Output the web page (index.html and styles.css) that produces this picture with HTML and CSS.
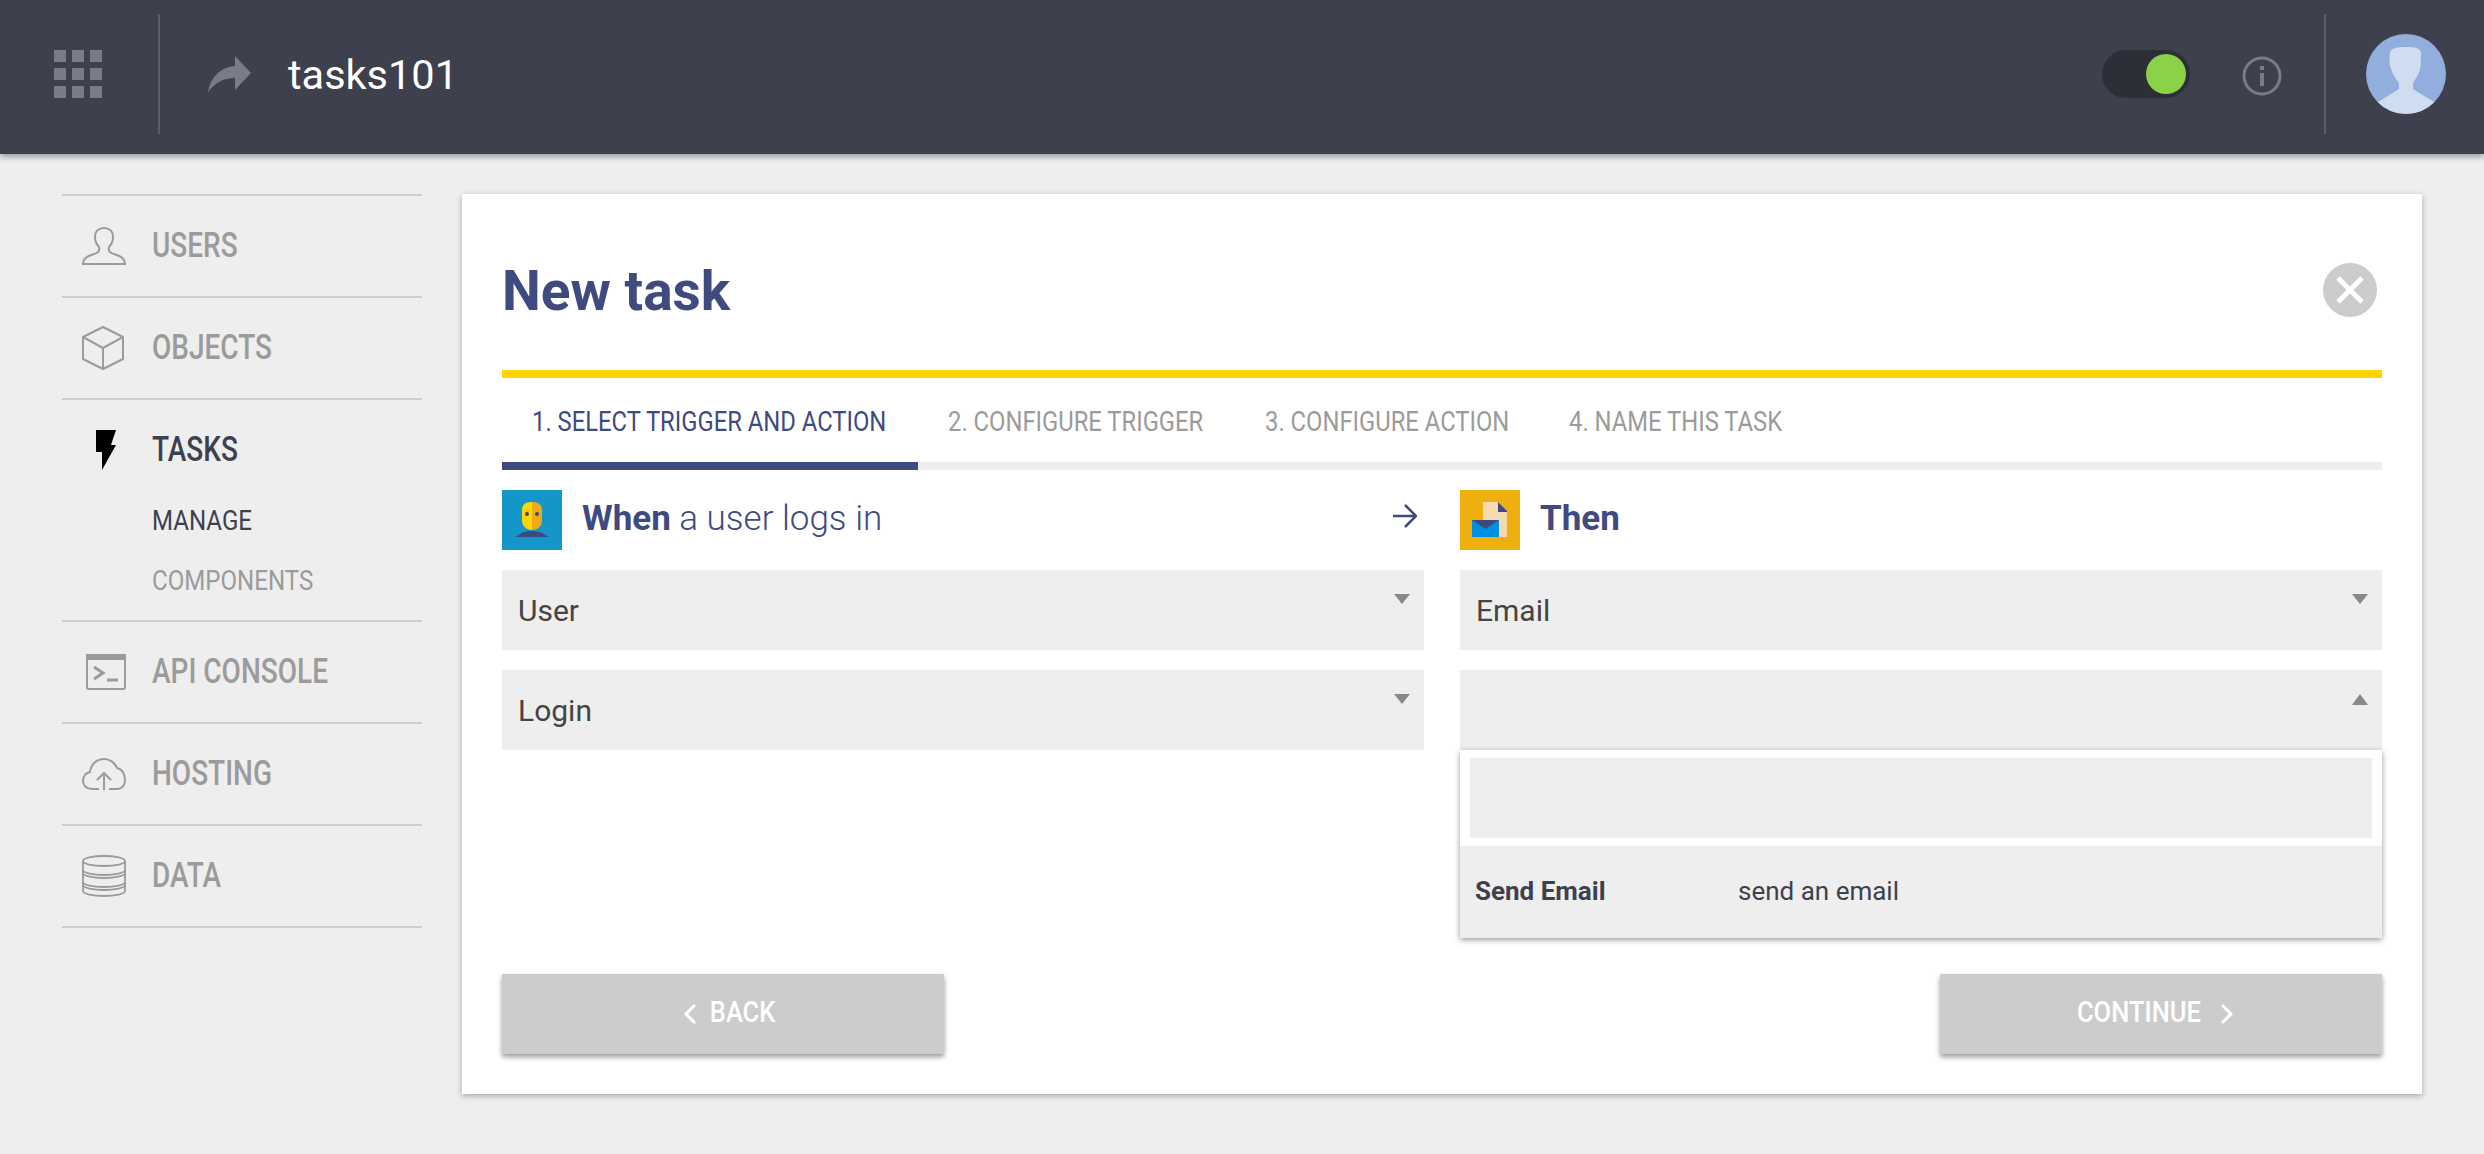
FILE: index.html
```html
<!DOCTYPE html>
<html lang="en">
<head>
  <meta charset="UTF-8">
  <title>tasks101</title>
  <link rel="stylesheet" href="styles.css">
</head>
<body>

  <header class="topbar">
    <div class="topbar-grid">
      <svg width="48" height="48" viewBox="0 0 48 48" fill="#797c86">
        <rect x="0" y="0" width="12" height="12"/><rect x="18" y="0" width="12" height="12"/><rect x="36" y="0" width="12" height="12"/>
        <rect x="0" y="18" width="12" height="12"/><rect x="18" y="18" width="12" height="12"/><rect x="36" y="18" width="12" height="12"/>
        <rect x="0" y="36" width="12" height="12"/><rect x="18" y="36" width="12" height="12"/><rect x="36" y="36" width="12" height="12"/>
      </svg>
    </div>
    <div class="topbar-title">
      <svg width="43" height="36" viewBox="0 0 43 36" fill="#797c86"><path d="M0 36C3 20 13 11 27 10V0L43 17 27 34V22C15 22 7 27 0 36Z"/></svg>
      <span class="app-name">tasks101</span>
    </div>
    <div class="topbar-tools">
      <div class="toggle"><span class="toggle-knob"></span></div>
      <svg class="info-icon" width="40" height="40" viewBox="0 0 40 40">
        <circle cx="20" cy="20" r="18" fill="none" stroke="#797c86" stroke-width="3"/>
        <rect x="18" y="10" width="4" height="4" fill="#797c86"/>
        <rect x="18" y="17" width="4" height="13" fill="#797c86"/>
      </svg>
    </div>
    <div class="topbar-user">
      <svg width="80" height="80" viewBox="0 0 80 80">
        <clipPath id="avatarClip"><circle cx="40" cy="40" r="40"/></clipPath>
        <g clip-path="url(#avatarClip)">
          <rect width="80" height="80" fill="#92aedd"/>
          <path d="M24 19C25 14 30 13 40 13 50 13 54 14 55 19 55 24 55 30 54 35 53 41 49 45 47 49V55L68 68 60 80H20L12 68 33 55V49C30 45 27 41 25 35 23 30 23 24 24 19Z" fill="#d0dcf0"/>
        </g>
      </svg>
    </div>
  </header>

  <div class="layout">
    <!-- Sidebar -->
    <nav class="sidebar">
      <a class="nav-item" href="#">
        <span class="nav-icon">
          <svg width="44" height="38" viewBox="0 0 44 38" fill="none" stroke="#9b9b9b" stroke-width="2"><path d="M1 37C1 31 6 29 12 27 16 26 18 24 17 20 14 17 13 13 13 10 13 4 17 1 22 1S31 4 31 10C31 13 30 17 27 20 26 24 28 26 32 27 38 29 43 31 43 37Z"/></svg>
        </span>
        <span class="nav-label">USERS</span>
      </a>
      <a class="nav-item" href="#">
        <span class="nav-icon">
          <svg width="42" height="44" viewBox="0 0 42 44" fill="none" stroke="#9b9b9b" stroke-width="2" stroke-linejoin="round"><path d="M21 1 41 11V33L21 43 1 33V11ZM1 11 21 22 41 11M21 22V43"/></svg>
        </span>
        <span class="nav-label">OBJECTS</span>
      </a>
      <div class="nav-group">
        <a class="nav-item nav-item-active" href="#">
          <span class="nav-icon icon-bolt">
            <svg width="20" height="40" viewBox="0 0 20 40" fill="#000"><path d="M0 0H20L15 15H20L6 40V22H0Z"/></svg>
          </span>
          <span class="nav-label">TASKS</span>
        </a>
        <a class="nav-sub nav-sub-active" href="#"><span class="cond">MANAGE</span></a>
        <a class="nav-sub" href="#"><span class="cond">COMPONENTS</span></a>
      </div>
      <a class="nav-item" href="#">
        <span class="nav-icon icon-terminal">
          <svg width="40" height="36" viewBox="0 0 40 36" fill="none" stroke="#9b9b9b" stroke-width="2"><rect x="1" y="1" width="38" height="34" rx="2"/><rect x="1" y="1" width="38" height="4" fill="#9b9b9b"/><path d="M8 13 17 19 8 25" stroke-width="3"/><path d="M21 26H32" stroke-width="3"/></svg>
        </span>
        <span class="nav-label">API CONSOLE</span>
      </a>
      <a class="nav-item" href="#">
        <span class="nav-icon">
          <svg width="44" height="32" viewBox="0 0 44 32" fill="none" stroke="#9b9b9b" stroke-width="2"><path d="M17 31H10C4 31 1 27 1 23 1 18 4 15 8 14 9 6 15 1 22 1 28 1 33 5 35 10 40 11 43 16 43 22 43 27 40 31 35 31H27"/><path d="M22 32V16M15 22 22 15 29 22"/></svg>
        </span>
        <span class="nav-label">HOSTING</span>
      </a>
      <a class="nav-item" href="#">
        <span class="nav-icon">
          <svg width="44" height="42" viewBox="0 0 44 42" fill="none" stroke="#9b9b9b" stroke-width="1.800"><ellipse cx="22" cy="6" rx="21" ry="5"/><path d="M1 6V36C1 39 11 41 22 41S43 39 43 36V6"/><path d="M1 15C1 18 11 20 22 20S43 18 43 15"/><path d="M1 18C1 21 11 23 22 23S43 21 43 18"/><path d="M1 27C1 30 11 32 22 32S43 30 43 27"/><path d="M1 30C1 33 11 35 22 35S43 33 43 30"/></svg>
        </span>
        <span class="nav-label">DATA</span>
      </a>
    </nav>

    <!-- New task panel -->
    <main class="panel">
      <div class="panel-head">
        <h1>New task</h1>
        <span class="close-btn">
          <svg width="28" height="28" viewBox="0 0 28 28" stroke="#fff" stroke-width="5"><path d="M2 2 26 26M26 2 2 26"/></svg>
        </span>
      </div>

      <div class="tabs">
        <span class="tab tab-1 tab-active"><span class="cond">1. SELECT TRIGGER AND ACTION</span></span>
        <span class="tab tab-2"><span class="cond">2. CONFIGURE TRIGGER</span></span>
        <span class="tab tab-3"><span class="cond">3. CONFIGURE ACTION</span></span>
        <span class="tab"><span class="cond">4. NAME THIS TASK</span></span>
      </div>

      <div class="columns">
        <section class="column">
          <div class="col-head">
            <svg width="60" height="60" viewBox="0 0 60 60">
              <rect width="60" height="60" fill="#1596c9"/>
              <path d="M14 47C18 43 24 41 30 41S42 43 46 47Z" fill="#3d4a80"/>
              <path d="M30 12C23 12 20 15 20 21V30C20 36 24 40 30 40Z" fill="#ffd500"/>
              <path d="M30 12C37 12 40 15 40 21V30C40 36 36 40 30 40Z" fill="#eeaa17"/>
              <circle cx="25" cy="24" r="2" fill="#3d4a80"/><circle cx="35" cy="24" r="2" fill="#3d4a80"/>
            </svg>
            <h2><b>When</b> a user logs in</h2>
            <svg class="col-arrow" width="24" height="24" viewBox="0 0 24 24" fill="none" stroke="#3d4a80" stroke-width="2.500"><path d="M0 12H22M12 1 23 12 12 23"/></svg>
          </div>
          <div class="select">User<span class="caret"></span></div>
          <div class="select">Login<span class="caret"></span></div>
        </section>

        <section class="column">
          <div class="col-head">
            <svg width="60" height="60" viewBox="0 0 60 60">
              <rect width="60" height="60" fill="#eeaf0f"/>
              <path d="M23 12H38L47 21V47H23Z" fill="#f5d9b0"/>
              <path d="M38 12 47 21V22H38Z" fill="#3d4a80"/>
              <rect x="12" y="30" width="27" height="17" fill="#0090e0"/>
              <path d="M12 30H39L25.500 39Z" fill="#3d4a80"/>
            </svg>
            <h2><b>Then</b></h2>
          </div>
          <div class="select">Email<span class="caret"></span></div>
          <div class="select-wrap">
            <div class="select"><span class="caret caret-up"></span></div>
            <div class="dropdown">
              <div class="dropdown-search"><div class="dropdown-input"></div></div>
              <div class="dropdown-row">
                <b>Send Email</b>
                <span>send an email</span>
              </div>
            </div>
          </div>
        </section>
      </div>

      <div class="actions">
        <button class="btn btn-back">
          <svg width="12" height="20" viewBox="0 0 12 20" fill="none" stroke="#fff" stroke-width="3"><path d="M11 1 2 10 11 19"/></svg>
          <span class="btn-label">BACK</span>
        </button>
        <button class="btn btn-next">
          <span class="btn-label">CONTINUE</span>
          <svg width="12" height="20" viewBox="0 0 12 20" fill="none" stroke="#fff" stroke-width="3"><path d="M1 1 10 10 1 19"/></svg>
        </button>
      </div>
    </main>
  </div>

</body>
</html>
```

FILE: styles.css
```css
* {
  box-sizing: border-box;
  margin: 0;
  padding: 0;
}

body {
  font-family: Roboto, sans-serif;
  background: #eeeeee;
  color: #444;
  height: 1154px;
  overflow: hidden;
}

a {
  text-decoration: none;
}

/* No condensed face installed, so narrow the glyphs */
.cond,
.nav-label {
  display: inline-block;
  white-space: nowrap;
  transform-origin: left center;
  transform: scaleX(0.85);
}

/* Top bar */
.topbar {
  display: flex;
  align-items: center;
  height: 154px;
  padding-bottom: 6px;
  background: #3e404e;
  box-shadow: 0 3px 6px rgba(0,0,0,0.35);
  position: relative;
}

.topbar-grid {
  width: 160px;
  height: 120px;
  padding-right: 2px;
  display: flex;
  align-items: center;
  justify-content: center;
  border-right: 2px solid #5d5f6b;
}

.topbar-title {
  display: flex;
  align-items: center;
  gap: 37px;
  padding-left: 48px;
  flex: 1;
}

.app-name {
  font-size: 41.500px;
  color: #fff;
}

.topbar-tools {
  display: flex;
  align-items: center;
  gap: 52px;
  height: 120px;
  padding-right: 42px;
  border-right: 2px solid #5d5f6b;
}

.toggle {
  width: 88px;
  height: 48px;
  border-radius: 24px;
  background: #2d2f38;
  padding: 4px;
  display: flex;
  justify-content: flex-end;
}

.toggle-knob {
  width: 40px;
  height: 40px;
  border-radius: 50%;
  background: #8cd248;
}

.info-icon {
  margin-top: 4px;
}

.topbar-user {
  height: 80px;
  padding: 0 38px 0 40px;
}

.topbar-user svg {
  display: block;
}

/* Layout */
.layout {
  display: flex;
  align-items: flex-start;
  padding: 40px 62px 0;
  gap: 40px;
}

/* Sidebar */
.sidebar {
  width: 360px;
  flex-shrink: 0;
  border-top: 2px solid #ccc;
}

.nav-item {
  display: flex;
  align-items: center;
  height: 102px;
  font-size: 35px;
  font-weight: 500;
  color: #9b9b9b;
  border-bottom: 2px solid #ccc;
}

.nav-label {
  padding-bottom: 2px;
  transform: scaleX(0.8);
}

.nav-icon {
  width: 70px;
  margin-left: 20px;
  display: flex;
}

.icon-bolt {
  padding-left: 14px;
}

.icon-terminal {
  padding-left: 4px;
}

.nav-group {
  border-bottom: 2px solid #ccc;
  padding-bottom: 9px;
}

.nav-item-active {
  height: 91px;
  padding-top: 9px;
  color: #3e404e;
  border-bottom: none;
}

.nav-sub {
  display: block;
  height: 60px;
  line-height: 60px;
  padding-left: 90px;
  font-size: 28px;
  color: #9b9b9b;
}

.nav-sub .cond {
  transform: scaleX(0.86);
}

.nav-sub-active {
  color: #3e404e;
}

/* Panel */
.panel {
  width: 1960px;
  height: 900px;
  background: #fff;
  padding: 0 40px;
  box-shadow: 0 2px 6px rgba(0,0,0,0.3);
}

.panel-head {
  display: flex;
  align-items: center;
  justify-content: space-between;
  height: 184px;
  padding-top: 16px;
  border-bottom: 8px solid #ffd500;
}

.panel-head h1 {
  padding-top: 2px;
  font-size: 55px;
  font-weight: 700;
  color: #3f4a80;
}

.close-btn {
  width: 54px;
  height: 54px;
  border-radius: 50%;
  background: #ccc;
  display: flex;
  align-items: center;
  justify-content: center;
  margin-right: 5px;
}

.tabs {
  display: flex;
  height: 92px;
  border-bottom: 8px solid #eee;
}

.tab {
  height: 92px;
  padding-left: 30px;
  line-height: 88px;
  font-size: 28px;
  color: #9b9b9b;
  overflow: hidden;
}

.tab-1 {
  width: 416px;
}

.tab-2 {
  width: 317px;
}

.tab-3 {
  width: 304px;
}

.tab-active {
  color: #3f4a80;
  border-bottom: 8px solid #3f4a80;
}

.columns {
  display: grid;
  grid-template-columns: 922px 922px;
  gap: 36px;
  padding-top: 20px;
  height: 504px;
}

.col-head {
  display: flex;
  align-items: center;
  gap: 20px;
  height: 60px;
  margin-bottom: 20px;
}

.col-head h2 {
  flex: 1;
  padding-bottom: 4px;
  font-size: 35px;
  font-weight: 300;
  color: #3f4a80;
}

.col-head h2 b {
  font-weight: 700;
}

.col-arrow {
  margin: 0 7px 8px 0;
}

.select {
  position: relative;
  height: 80px;
  line-height: 82px;
  padding-left: 16px;
  font-size: 30px;
  background: #eee;
  margin-bottom: 20px;
}

.caret {
  position: absolute;
  top: 24px;
  right: 14px;
  border-left: 8px solid transparent;
  border-right: 8px solid transparent;
  border-top: 10px solid #888;
}

.caret-up {
  border-top: none;
  border-bottom: 11px solid #888;
}

.select-wrap {
  position: relative;
}

.dropdown {
  position: absolute;
  top: 80px;
  left: 0;
  right: 0;
  background: #eee;
  box-shadow: 0 2px 6px rgba(0,0,0,0.4);
}

.dropdown-search {
  background: #fff;
  padding: 8px 10px;
}

.dropdown-input {
  height: 80px;
  background: #eee;
}

.dropdown-row {
  display: flex;
  align-items: center;
  height: 92px;
  padding-left: 15px;
  padding-bottom: 2px;
  font-size: 26px;
  color: #3e404e;
}

.dropdown-row b {
  width: 263px;
}

/* Buttons */
.actions {
  display: flex;
  justify-content: space-between;
}

.btn {
  display: flex;
  align-items: center;
  justify-content: center;
  gap: 8px;
  width: 442px;
  height: 80px;
  border: none;
  background: #ccc;
  color: #fff;
  font-family: Roboto, sans-serif;
  font-size: 30px;
  font-weight: 500;
  box-shadow: 0 3px 5px rgba(0,0,0,0.4);
}

.btn-back {
  padding-left: 19px;
}

.btn-next {
  padding-right: 23px;
  gap: 9px;
}

.btn-label {
  padding-bottom: 6px;
  transform: scaleX(0.85);
}
```
